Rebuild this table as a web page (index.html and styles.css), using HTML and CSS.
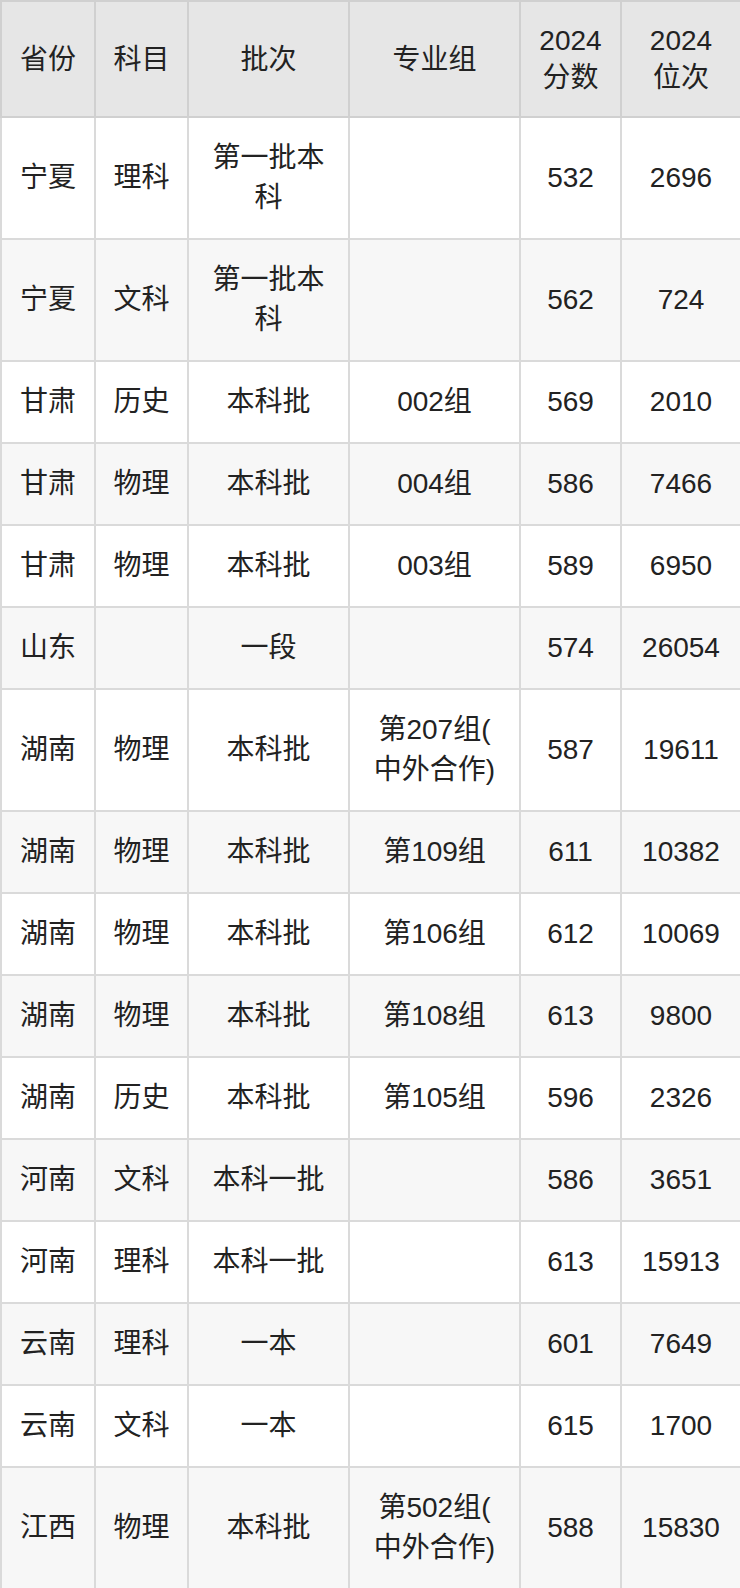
FILE: index.html
```html
<!DOCTYPE html>
<html lang="zh-CN">
<head>
<meta charset="utf-8">
<title>录取分数</title>
<link rel="stylesheet" href="styles.css">
</head>
<body>
<table class="score-table">
  <colgroup>
    <col class="c1"><col class="c2"><col class="c3"><col class="c4"><col class="c5"><col class="c6">
  </colgroup>
  <thead>
    <tr><th>省份</th><th>科目</th><th>批次</th><th>专业组</th><th>2024<br>分数</th><th>2024<br>位次</th></tr>
  </thead>
  <tbody>
    <tr class="tall"><td>宁夏</td><td>理科</td><td>第一批本<br>科</td><td></td><td>532</td><td>2696</td></tr>
    <tr class="tall"><td>宁夏</td><td>文科</td><td>第一批本<br>科</td><td></td><td>562</td><td>724</td></tr>
    <tr><td>甘肃</td><td>历史</td><td>本科批</td><td>002组</td><td>569</td><td>2010</td></tr>
    <tr><td>甘肃</td><td>物理</td><td>本科批</td><td>004组</td><td>586</td><td>7466</td></tr>
    <tr><td>甘肃</td><td>物理</td><td>本科批</td><td>003组</td><td>589</td><td>6950</td></tr>
    <tr><td>山东</td><td></td><td>一段</td><td></td><td>574</td><td>26054</td></tr>
    <tr class="tall"><td>湖南</td><td>物理</td><td>本科批</td><td>第207组(<br>中外合作)</td><td>587</td><td>19611</td></tr>
    <tr><td>湖南</td><td>物理</td><td>本科批</td><td>第109组</td><td>611</td><td>10382</td></tr>
    <tr><td>湖南</td><td>物理</td><td>本科批</td><td>第106组</td><td>612</td><td>10069</td></tr>
    <tr><td>湖南</td><td>物理</td><td>本科批</td><td>第108组</td><td>613</td><td>9800</td></tr>
    <tr><td>湖南</td><td>历史</td><td>本科批</td><td>第105组</td><td>596</td><td>2326</td></tr>
    <tr><td>河南</td><td>文科</td><td>本科一批</td><td></td><td>586</td><td>3651</td></tr>
    <tr><td>河南</td><td>理科</td><td>本科一批</td><td></td><td>613</td><td>15913</td></tr>
    <tr><td>云南</td><td>理科</td><td>一本</td><td></td><td>601</td><td>7649</td></tr>
    <tr><td>云南</td><td>文科</td><td>一本</td><td></td><td>615</td><td>1700</td></tr>
    <tr class="tall"><td>江西</td><td>物理</td><td>本科批</td><td>第502组(<br>中外合作)</td><td>588</td><td>15830</td></tr>
  </tbody>
</table>
</body>
</html>
```

FILE: styles.css
```css
html, body {
  margin: 0;
  padding: 0;
  background: #ffffff;
}

body {
  font-family: "Liberation Sans", "Noto Sans CJK SC", sans-serif;
  color: #222222;
}

.score-table {
  width: 740px;
  table-layout: fixed;
  border-collapse: collapse;
  font-size: 28px;
}

.c1 { width: 94px; }
.c2 { width: 93px; }
.c3 { width: 161px; }
.c4 { width: 171px; }
.c5 { width: 101px; }
.c6 { width: 120px; }

.score-table th,
.score-table td {
  border: 2px solid #dadada;
  padding: 20px 6px;
  text-align: center;
  vertical-align: middle;
  font-weight: normal;
  line-height: 40px;
}

.score-table th {
  background: #e6e6e6;
  border-color: #d0d0d0;
  line-height: 37px;
}

.score-table tbody tr:nth-child(even) td {
  background: #f7f7f7;
}
```
